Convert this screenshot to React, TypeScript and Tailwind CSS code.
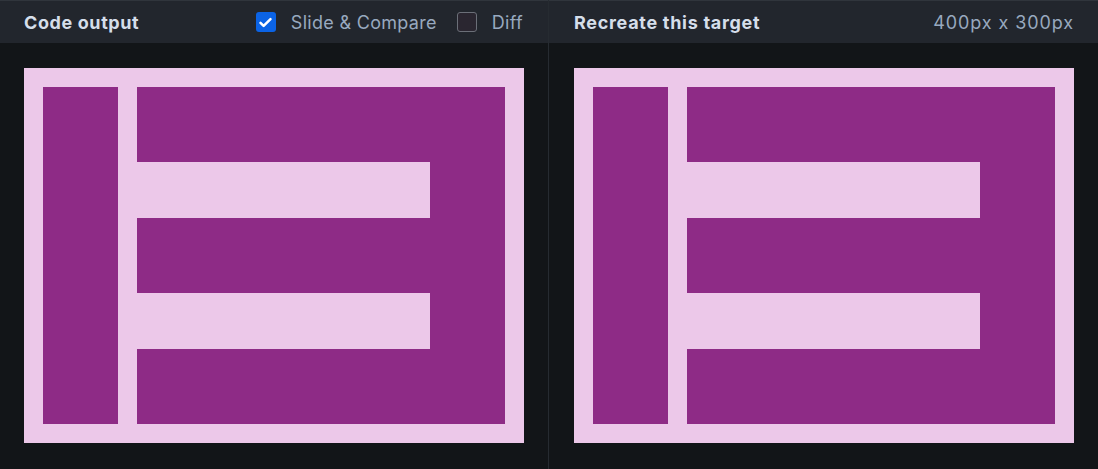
import React from "react";

function Target() {
  return (
    <svg
      width="500"
      height="375"
      viewBox="0 0 400 300"
      className="block"
      shapeRendering="crispEdges"
    >
      <rect x="0" y="0" width="400" height="300" fill="#ecc8e9" />
      <rect x="15" y="15" width="60" height="270" fill="#8e2b86" />
      <rect x="90" y="15" width="295" height="270" fill="#8e2b86" />
      <rect x="90" y="75" width="235" height="45" fill="#ecc8e9" />
      <rect x="90" y="180" width="235" height="45" fill="#ecc8e9" />
    </svg>
  );
}

function Checkbox({ checked }: { checked: boolean }) {
  if (checked) {
    return (
      <span className="flex h-5 w-5 items-center justify-center rounded-[3px] bg-[#0b63e5]">
        <svg width="15" height="15" viewBox="0 0 24 24" fill="none">
          <path
            d="M4 12.5l5 5L20 6.5"
            stroke="white"
            strokeWidth="4"
            strokeLinecap="round"
            strokeLinejoin="round"
          />
        </svg>
      </span>
    );
  }
  return (
    <span className="block h-5 w-5 rounded-[3px] border border-[#6b6f78] bg-[#2a2630]" />
  );
}

export default function App() {
  return (
    <div
      className="flex h-[469px] w-[1098px] bg-[#121518]"
      style={{ fontFamily: "Inter, 'Noto Sans', sans-serif" }}
    >
      <div className="flex w-[549px] flex-col border-r border-[#262b31]">
        <div className="flex h-[43px] items-center border-t border-[#30353c] bg-[#22262d] pl-6 pr-[25px]">
          <span className="text-[18px] font-bold tracking-[0.6px] text-[#d5deea]">
            Code output
          </span>
          <div className="ml-auto flex items-center">
            <Checkbox checked />
            <span className="ml-[15px] text-[18px] tracking-[0.3px] text-[#98a9bf]">
              Slide &amp; Compare
            </span>
            <span className="ml-[20px]">
              <Checkbox checked={false} />
            </span>
            <span className="ml-[15px] text-[18px] tracking-[0.3px] text-[#98a9bf]">
              Diff
            </span>
          </div>
        </div>
        <div className="pl-6 pt-[25px]">
          <Target />
        </div>
      </div>
      <div className="flex flex-1 flex-col">
        <div className="flex h-[43px] items-center border-t border-[#30353c] bg-[#22262d] pl-[25px] pr-6">
          <span className="text-[18px] font-bold tracking-[0.7px] text-[#d5deea]">
            Recreate this target
          </span>
          <span className="ml-auto text-[18px] tracking-[0.9px] text-[#98a9bf]">
            400px x 300px
          </span>
        </div>
        <div className="pl-[25px] pt-[25px]">
          <Target />
        </div>
      </div>
    </div>
  );
}
